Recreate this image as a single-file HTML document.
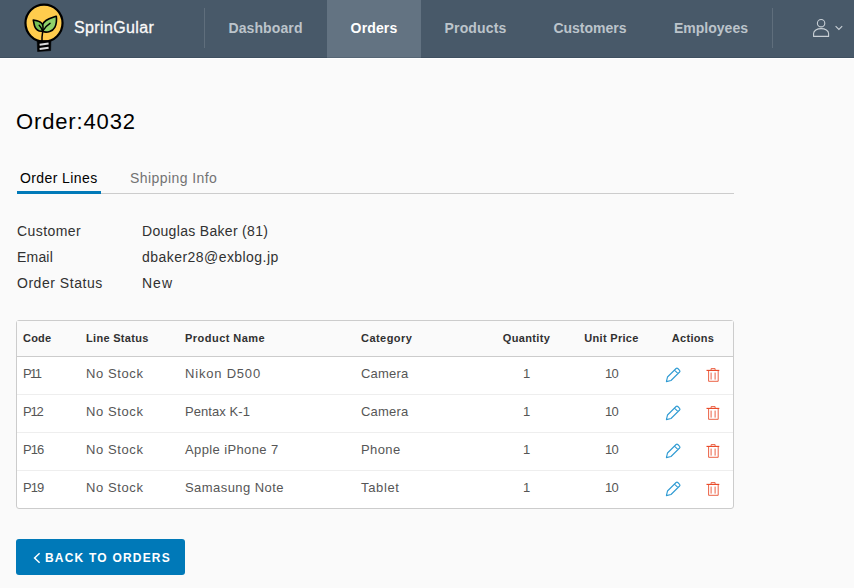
<!DOCTYPE html>
<html lang="en">
<head>
<meta charset="utf-8">
<title>SprinGular - Order 4032</title>
<style>
*{box-sizing:border-box;margin:0;padding:0}
html,body{width:854px;height:588px;overflow:hidden}
body{background:#fafafa;font-family:"Liberation Sans",Arial,sans-serif;color:#313131;position:relative}
.t{display:inline-block;white-space:nowrap}
header{position:absolute;left:0;top:0;width:854px;height:58px;background:#485969;box-shadow:0 1px 0 #fff}
header:after{content:'';position:absolute;left:0;top:57px;width:854px;height:1px;background:rgba(20,35,50,.16)}
.logo{position:absolute;left:20px;top:0;width:50px;height:56px}
.user{position:absolute;left:812px;top:18px;width:34px;height:20px}
.brand{position:absolute;left:74px;top:18px;font-size:16px;line-height:20px;color:#fafafa;white-space:nowrap;-webkit-text-stroke:0.3px #fafafa}
.divider{position:absolute;top:8px;width:1px;height:40px;background:#5f6e7c}
.nav a{position:absolute;top:0;height:58px;line-height:57px;font-size:14px;color:#bcc4cb;text-align:center;text-decoration:none;white-space:nowrap;font-weight:bold}
.nav a.active{background:#637382;color:#fff}
h1{position:absolute;left:16px;top:108px;font-size:22px;line-height:28px;font-weight:normal;color:#000;white-space:nowrap}
.tabs{position:absolute;left:17px;top:164px;width:717px;height:30px;border-bottom:1px solid #ccc}
.tabs b{position:absolute;top:4px;font-size:14px;line-height:20px;white-space:nowrap;font-weight:normal}
.tabs .on{color:#000}
.tabs .off{color:#737373}
.tabs i{position:absolute;left:0;top:27px;width:84px;height:3px;background:#0079b8}
.info div{position:absolute;font-size:14px;line-height:20px;color:#313131;white-space:nowrap}
table{position:absolute;left:16px;top:320px;width:718px;border-collapse:separate;border-spacing:0;border:1px solid #ccc;border-radius:3px;background:#fff;table-layout:fixed}
th{height:36px;font-size:11px;font-weight:bold;color:#313131;text-align:left;padding:0 0 1px 6px;border-bottom:1px solid #ccc;background:#fafafa;white-space:nowrap}
td{height:38px;font-size:13px;color:#565656;padding:0 0 4px 6px;border-bottom:1px solid #eee;white-space:nowrap}
tr:last-child td{border-bottom:0;height:37px}
.c{text-align:center;padding-left:0}
.ic{position:absolute;left:665px;width:58px;height:18px}
.btn{position:absolute;left:16px;top:539px;width:169px;height:36px;background:#0079b8;border-radius:3px;color:#fff;font-size:12px;font-weight:bold;line-height:36px;white-space:nowrap}
.btn svg{position:absolute;left:17px;top:12.5px;width:8px;height:12px}
.btn .t{position:absolute;left:29px;top:1px}
</style>
</head>
<body>
<header>
  <svg class="logo" viewBox="0 0 50 56">
    <circle cx="24" cy="23.1" r="18.55" fill="#ffcc4d" stroke="#000" stroke-width="2.2"/>
    <path d="M17.2 40.6H30.9L30.6 50.6L17.6 51.5Z" fill="#000" stroke="#000" stroke-width="0.6" stroke-linejoin="round"/>
    <path d="M19.6 44.7L28.6 43.6M19.6 48.9L28.6 47.8" stroke="#dcdcdc" stroke-width="2"/>
    <path d="M22.6 31.6C20.5 27 22.5 23 26 20.5C29 18.4 33 17.4 36.3 16.2C36.8 20 36.6 24 34.8 27.4C32.6 31.4 27.5 33 22.6 31.6Z" fill="#8fd16a" stroke="#000" stroke-width="1.6" stroke-linejoin="round"/>
    <path d="M22.4 31.2C18.5 31.6 16 29.5 14.8 26.6C14 24.6 13.8 22.2 13.3 20C16 20.6 19.4 21 21.4 23C23.4 25 23.3 28.4 22.4 31.2Z" fill="#77c256" stroke="#000" stroke-width="1.6" stroke-linejoin="round"/>
    <path d="M22.8 31C24.5 27.6 27 25.2 30 23.3M22.4 30.6C21.6 28.4 20.6 26.6 19.2 25.2M22.9 30C22.4 33.5 21.8 37 22 40.5" fill="none" stroke="#000" stroke-width="1.5" stroke-linecap="round"/>
  </svg>
  <div class="brand"><span class="t" style="letter-spacing:0.38px">SprinGular</span></div>
  <div class="divider" style="left:204px"></div>
  <nav class="nav">
    <a style="left:204px;width:123px"><span class="t" style="letter-spacing:0.11px">Dashboard</span></a>
    <a class="active" style="left:327px;width:94px"><span class="t" style="letter-spacing:0.14px">Orders</span></a>
    <a style="left:421px;width:109px"><span class="t" style="letter-spacing:0.14px">Products</span></a>
    <a style="left:530px;width:120px"><span class="t" style="letter-spacing:0.00px">Customers</span></a>
    <a style="left:650px;width:122px"><span class="t" style="letter-spacing:0.00px">Employees</span></a>
  </nav>
  <div class="divider" style="left:772px"></div>
  <svg class="user" viewBox="0 0 34 20">
    <circle cx="9.1" cy="5.2" r="3.7" fill="none" stroke="#c9d0d6" stroke-width="1.1"/>
    <path d="M1.6 18.4V15.6C1.6 12.6 5 10.6 9.1 10.6C13.2 10.6 16.6 12.6 16.6 15.6V18.4Z" fill="none" stroke="#c9d0d6" stroke-width="1.1" stroke-linejoin="round"/>
    <path d="M23.6 8.2L26.9 11.4L30.2 8.2" fill="none" stroke="#c9d0d6" stroke-width="1.1"/>
  </svg>
</header>
<h1><span class="t" style="letter-spacing:0.86px">Order:4032</span></h1>
<div class="tabs">
  <b class="on" style="left:3px"><span class="t" style="letter-spacing:0.40px">Order Lines</span></b>
  <b class="off" style="left:113px"><span class="t" style="letter-spacing:0.43px">Shipping Info</span></b>
  <i></i>
</div>
<div class="info">
  <div style="left:17px;top:221px"><span class="t" style="letter-spacing:0.43px">Customer</span></div><div style="left:142px;top:221px"><span class="t" style="letter-spacing:0.31px">Douglas Baker (81)</span></div>
  <div style="left:17px;top:247px"><span class="t" style="letter-spacing:0.19px">Email</span></div><div style="left:142px;top:247px"><span class="t" style="letter-spacing:0.45px">dbaker28@exblog.jp</span></div>
  <div style="left:17px;top:273px"><span class="t" style="letter-spacing:0.53px">Order Status</span></div><div style="left:142px;top:273px"><span class="t" style="letter-spacing:1.00px">New</span></div>
</div>
<table>
  <colgroup><col style="width:63px"><col style="width:99px"><col style="width:176px"><col style="width:128px"><col style="width:87px"><col style="width:83px"><col style="width:80px"></colgroup>
  <thead><tr><th><span class="t" style="letter-spacing:0.20px">Code</span></th><th><span class="t" style="letter-spacing:0.30px">Line Status</span></th><th><span class="t" style="letter-spacing:0.47px">Product Name</span></th><th><span class="t" style="letter-spacing:0.45px">Category</span></th><th class="c"><span class="t" style="letter-spacing:0.37px">Quantity</span></th><th class="c"><span class="t" style="letter-spacing:0.31px">Unit Price</span></th><th class="c"><span class="t" style="letter-spacing:0.30px">Actions</span></th></tr></thead>
  <tbody>
    <tr><td><span class="t" style="letter-spacing:-1.60px">P11</span></td><td><span class="t" style="letter-spacing:0.60px">No Stock</span></td><td><span class="t" style="letter-spacing:0.80px">Nikon D500</span></td><td><span class="t" style="letter-spacing:0.20px">Camera</span></td><td class="c"><span class="t" style="letter-spacing:0.00px">1</span></td><td class="c"><span class="t" style="letter-spacing:-0.80px">10</span></td><td></td></tr>
    <tr><td><span class="t" style="letter-spacing:-1.20px">P12</span></td><td><span class="t" style="letter-spacing:0.60px">No Stock</span></td><td><span class="t" style="letter-spacing:0.07px">Pentax K-1</span></td><td><span class="t" style="letter-spacing:0.20px">Camera</span></td><td class="c"><span class="t" style="letter-spacing:0.00px">1</span></td><td class="c"><span class="t" style="letter-spacing:-0.80px">10</span></td><td></td></tr>
    <tr><td><span class="t" style="letter-spacing:-1.00px">P16</span></td><td><span class="t" style="letter-spacing:0.60px">No Stock</span></td><td><span class="t" style="letter-spacing:0.38px">Apple iPhone 7</span></td><td><span class="t" style="letter-spacing:0.40px">Phone</span></td><td class="c"><span class="t" style="letter-spacing:0.00px">1</span></td><td class="c"><span class="t" style="letter-spacing:-0.80px">10</span></td><td></td></tr>
    <tr><td><span class="t" style="letter-spacing:-1.00px">P19</span></td><td><span class="t" style="letter-spacing:0.60px">No Stock</span></td><td><span class="t" style="letter-spacing:0.44px">Samasung Note</span></td><td><span class="t" style="letter-spacing:0.65px">Tablet</span></td><td class="c"><span class="t" style="letter-spacing:0.00px">1</span></td><td class="c"><span class="t" style="letter-spacing:-0.80px">10</span></td><td></td></tr>
  </tbody>
</table>
<svg class="ic" style="top:366px" viewBox="0 0 58 18"><path d="M1.4 15.6L2.5 11L11.1 2.5C11.6 2 12.3 2 12.8 2.5L14.6 4.3C15.1 4.8 15.1 5.5 14.6 6L6 14.5Z M9.5 4.1L13 7.6" fill="none" stroke="#2f9bd3" stroke-width="1.1" stroke-linejoin="round"/><path d="M41.5 4.4H54.3" fill="none" stroke="#e8421f" stroke-width="1.1"/><path d="M46.1 4.2V2.6H50.1V4.2M43.6 5V15.3H53.2V5M46.1 6.6V13.6M50.1 6.6V13.6" fill="none" stroke="#ea5a3c" stroke-width="0.95"/></svg><svg class="ic" style="top:404px" viewBox="0 0 58 18"><path d="M1.4 15.6L2.5 11L11.1 2.5C11.6 2 12.3 2 12.8 2.5L14.6 4.3C15.1 4.8 15.1 5.5 14.6 6L6 14.5Z M9.5 4.1L13 7.6" fill="none" stroke="#2f9bd3" stroke-width="1.1" stroke-linejoin="round"/><path d="M41.5 4.4H54.3" fill="none" stroke="#e8421f" stroke-width="1.1"/><path d="M46.1 4.2V2.6H50.1V4.2M43.6 5V15.3H53.2V5M46.1 6.6V13.6M50.1 6.6V13.6" fill="none" stroke="#ea5a3c" stroke-width="0.95"/></svg><svg class="ic" style="top:442px" viewBox="0 0 58 18"><path d="M1.4 15.6L2.5 11L11.1 2.5C11.6 2 12.3 2 12.8 2.5L14.6 4.3C15.1 4.8 15.1 5.5 14.6 6L6 14.5Z M9.5 4.1L13 7.6" fill="none" stroke="#2f9bd3" stroke-width="1.1" stroke-linejoin="round"/><path d="M41.5 4.4H54.3" fill="none" stroke="#e8421f" stroke-width="1.1"/><path d="M46.1 4.2V2.6H50.1V4.2M43.6 5V15.3H53.2V5M46.1 6.6V13.6M50.1 6.6V13.6" fill="none" stroke="#ea5a3c" stroke-width="0.95"/></svg><svg class="ic" style="top:480px" viewBox="0 0 58 18"><path d="M1.4 15.6L2.5 11L11.1 2.5C11.6 2 12.3 2 12.8 2.5L14.6 4.3C15.1 4.8 15.1 5.5 14.6 6L6 14.5Z M9.5 4.1L13 7.6" fill="none" stroke="#2f9bd3" stroke-width="1.1" stroke-linejoin="round"/><path d="M41.5 4.4H54.3" fill="none" stroke="#e8421f" stroke-width="1.1"/><path d="M46.1 4.2V2.6H50.1V4.2M43.6 5V15.3H53.2V5M46.1 6.6V13.6M50.1 6.6V13.6" fill="none" stroke="#ea5a3c" stroke-width="0.95"/></svg>
<div class="btn"><svg viewBox="0 0 8 12"><path d="M6.6 1.2L1.6 6L6.6 10.8" fill="none" stroke="#fff" stroke-width="1.5"/></svg><span class="t" style="letter-spacing:1.20px">BACK TO ORDERS</span></div>
</body>
</html>
